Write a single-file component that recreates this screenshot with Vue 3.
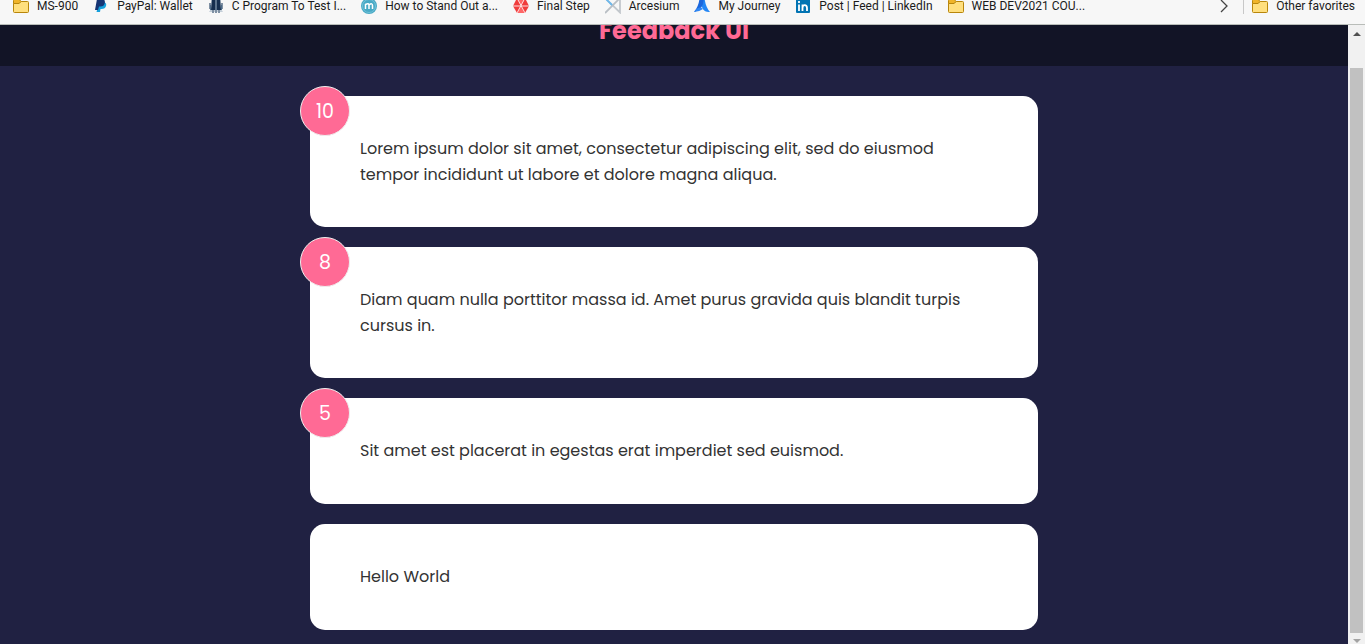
<script setup>
const bookmarks = [
  { icon: 'folder', label: 'MS-900' },
  { icon: 'paypal', label: 'PayPal: Wallet' },
  { icon: 'code', label: 'C Program To Test I...' },
  { icon: 'medium', label: 'How to Stand Out a...' },
  { icon: 'gem', label: 'Final Step' },
  { icon: 'arcesium', label: 'Arcesium' },
  { icon: 'journey', label: 'My Journey' },
  { icon: 'linkedin', label: 'Post | Feed | LinkedIn' },
  { icon: 'folder', label: 'WEB DEV2021 COU...' },
]

const feedback = [
  { id: 1, rating: 10, text: 'Lorem ipsum dolor sit amet, consectetur adipiscing elit, sed do eiusmod tempor incididunt ut labore et dolore magna aliqua.' },
  { id: 2, rating: 8, text: 'Diam quam nulla porttitor massa id. Amet purus gravida quis blandit turpis cursus in.' },
  { id: 3, rating: 5, text: 'Sit amet est placerat in egestas erat imperdiet sed euismod.' },
  { id: 4, rating: null, text: 'Hello World' },
]
</script>

<template>
  <div class="window">
    <nav class="bookmarks" aria-label="Bookmarks">
      <a v-for="b in bookmarks" :key="b.label" class="bookmark" href="#">
        <svg class="icon" viewBox="0 0 16 16" aria-hidden="true">
          <g v-if="b.icon === 'folder'">
            <path d="M.5 2.5a1 1 0 0 1 1-1h4.700l2 2-2 2H.5z" fill="#f0b429" stroke="#b8860b" />
            <path d="M.5 5.500h5.700l2-2h6.300a1 1 0 0 1 1 1v9a1 1 0 0 1-1 1h-13a1 1 0 0 1-1-1z" fill="#ffdf7e" stroke="#b8860b" />
          </g>
          <g v-else-if="b.icon === 'paypal'">
            <path d="M6 4h5q3 1 2 4-.700 3-4.500 3H7.500L7 14H3.500z" fill="#16a0dc" />
            <path d="M4 1h5q3.500.5 2.800 4T7.500 8.500H6L5 12H2z" fill="#173574" />
          </g>
          <g v-else-if="b.icon === 'code'">
            <path d="M3 0h10v11l2 3H1l2-3z" fill="#c3ced8" />
            <path d="M1 5h2v6H1zM13 5h2v6h-2zM4 12h2v3H4zM7 12h2v3H7zM10 12h2v3h-2z" fill="#7f90a3" />
            <path d="M4 0h3.500v12H3zM8.500 0H12l1 12H8.500z" fill="#152f4f" />
            <path d="M7.500 0h1v12h-1zM2 7h1v5H2zM13 7h1v5h-1z" fill="#4c6b88" />
          </g>
          <g v-else-if="b.icon === 'medium'">
            <circle cx="8" cy="8" r="8" fill="#48a9c5" />
            <circle cx="8" cy="8" r="6.500" fill="none" stroke="#82cbe0" stroke-width=".7" />
            <path d="M4.500 11V6.500q3.500-2 3.500 1V11m0-4q3.500-2.500 3.500.5V11" fill="none" stroke="#fff" stroke-width="1.500" />
          </g>
          <g v-else-if="b.icon === 'gem'">
            <path d="M4 0h8l4 8-4 7H4L0 8z" fill="#f03c3c" />
            <path d="M4 0l4 8 4-8zM4 15l4-7 4 7z" fill="#f66" />
            <path d="M0 8h16M4 0l8 15M12 0L4 15" stroke="#fde0e0" stroke-width="1" />
          </g>
          <g v-else-if="b.icon === 'arcesium'" fill="none" stroke-width="1.800">
            <path d="M15 0v14.500L1 1" stroke="#c2c7cc" />
            <path d="M0 15L15 0" stroke="#b8bec4" />
            <path d="M1 1l6 6" stroke="#6cb8ec" />
          </g>
          <g v-else-if="b.icon === 'journey'">
            <path d="M5.500 0h5q1 9 5.500 14-5 .5-7.500-3.500z" fill="#2386f5" />
            <path d="M5.500 0h4.500L9 6Q7 12 0 14q5-6 5.500-14z" fill="#1b66dc" />
            <path d="M0 14q3-5 7-4.500L9 11q-4 3-9 3z" fill="#2f86f2" />
          </g>
          <g v-else>
            <rect x="1" y="1" width="14" height="14" rx="1" fill="#0274b3" />
            <path d="M4 6.500V13M4 3v2M7.500 13V6.500m0 3.500q0-2.800 2.200-2.800T12 10v3" fill="none" stroke="#fff" stroke-width="1.800" />
          </g>
        </svg>
        <span>{{ b.label }}</span>
      </a>
      <button class="more" type="button" aria-label="More bookmarks">
        <svg viewBox="0 0 8 14" aria-hidden="true"><path d="M1 1l6 6-6 6" fill="none" stroke="#444" stroke-width="1.300" /></svg>
      </button>
      <a class="bookmark other" href="#">
        <svg class="icon" viewBox="0 0 16 16" aria-hidden="true">
          <path d="M.5 2.500a1 1 0 0 1 1-1h4.700l2 2-2 2H.5z" fill="#f0b429" stroke="#b8860b" />
          <path d="M.5 5.500h5.700l2-2h6.300a1 1 0 0 1 1 1v9a1 1 0 0 1-1 1h-13a1 1 0 0 1-1-1z" fill="#ffdf7e" stroke="#b8860b" />
        </svg>
        <span>Other favorites</span>
      </a>
    </nav>

    <div class="viewport">
      <div class="page">
        <header class="header"><h1>Feedback UI</h1></header>
        <main class="list">
          <article v-for="item in feedback" :key="item.id" class="card">
            <div v-if="item.rating" class="rating">{{ item.rating }}</div>
            <p>{{ item.text }}</p>
          </article>
        </main>
      </div>
      <div class="scrollbar">
        <button class="arrow" type="button" aria-label="Scroll up">
          <svg viewBox="0 0 8 4" aria-hidden="true"><path d="M4 0l4 4H0z" fill="#505050" /></svg>
        </button>
        <div class="thumb"></div>
        <button class="arrow down" type="button" aria-label="Scroll down">
          <svg viewBox="0 0 8 4" aria-hidden="true"><path d="M4 4l4-4H0z" fill="#a3a3a3" /></svg>
        </button>
      </div>
    </div>
  </div>
</template>

<style>
body {
  margin: 0;
  overflow: hidden;
}
</style>

<style scoped>
.window {
  height: 100vh;
  display: flex;
  flex-direction: column;
  overflow: hidden;
  font-family: Poppins, Inter, sans-serif;
}
.bookmarks {
  flex: none;
  display: flex;
  align-items: center;
  gap: 15px;
  height: 12px;
  padding: 0 10px 12px 13px;
  background: #f7f7f7;
  border-bottom: 1px solid #b9bdb9;
  font: 12px/12px "Segoe UI", Roboto, sans-serif;
}
.bookmark {
  display: flex;
  align-items: center;
  gap: 8px;
  color: #1b1b1b;
  text-decoration: none;
  white-space: nowrap;
}
.icon {
  flex: none;
  width: 16px;
  height: 16px;
}
button {
  display: flex;
  align-items: center;
  justify-content: center;
  padding: 0;
  border: 0;
  background: none;
}
.more {
  margin-left: auto;
}
.more svg {
  width: 8px;
  height: 14px;
}
.other {
  height: 16px;
  padding-left: 8px;
  border-left: 1px solid #c8c8c8;
}
.viewport {
  flex: 1;
  min-height: 0;
  display: flex;
}
.page {
  flex: 1;
  min-width: 0;
  overflow: hidden;
  background: #202142;
}
.header {
  display: flex;
  align-items: flex-end;
  justify-content: center;
  height: 41px;
  background: #121426;
}
h1 {
  margin: 0 0 17px;
  color: #ff6a95;
  font-size: 24px;
  line-height: 36px;
  font-weight: 700;
}
.list {
  display: flex;
  flex-direction: column;
  gap: 20px;
  max-width: 728px;
  margin: 30px auto;
}
.card {
  position: relative;
  padding: 40px 50px;
  border-radius: 15px;
  background: #fff;
}
.card p {
  margin: 0;
  color: #333;
  font-size: 16px;
  line-height: 1.6;
}
.rating {
  position: absolute;
  top: -10px;
  left: -10px;
  box-sizing: border-box;
  width: 50px;
  height: 50px;
  border: 1px solid #eee;
  border-radius: 50%;
  background: #ff6a95;
  color: #fff;
  font-size: 19px;
  line-height: 50px;
  text-align: center;
}
.scrollbar {
  flex: none;
  display: flex;
  flex-direction: column;
  width: 17px;
  background: #f1f1f1;
}
.arrow {
  height: 18px;
}
.arrow svg {
  width: 8px;
  height: 4px;
}
.arrow.down {
  height: 11px;
  align-items: flex-end;
  padding-bottom: 1px;
}
.thumb {
  flex: 1;
  margin: 25px 2px 0;
  background: #c1c1c1;
}
</style>
